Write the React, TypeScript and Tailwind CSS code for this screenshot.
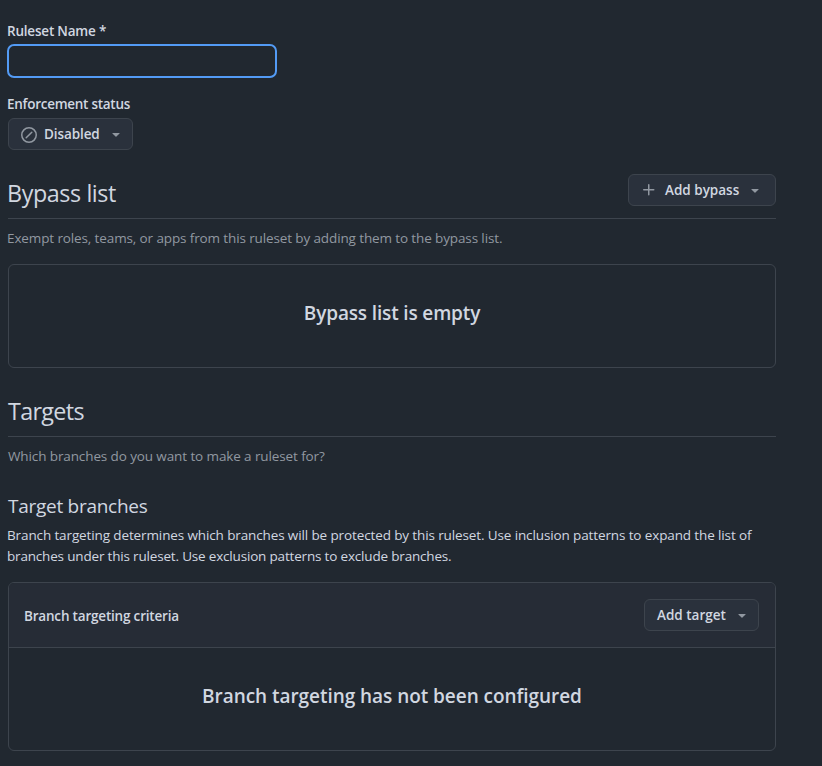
import type { ReactNode } from "react";

function Caret() {
  return (
    <svg width="16" height="16" viewBox="0 0 16 16" fill="#9198a1" className="shrink-0">
      <path d="m4.427 7.427 3.396 3.396a.25.25 0 0 0 .354 0l3.396-3.396A.25.25 0 0 0 11.396 7H4.604a.25.25 0 0 0-.177.427Z" />
    </svg>
  );
}

function MenuButton({ icon, children, className }: { icon?: ReactNode; children: ReactNode; className: string }) {
  return (
    <button
      type="button"
      className={`flex h-8 shrink-0 items-center rounded-md border border-[#3d444d] bg-[#2a313c] pl-3 text-[13.5px] font-semibold whitespace-nowrap ${className}`}
    >
      {icon}
      <span className="flex-1 text-left">{children}</span>
      <Caret />
    </button>
  );
}

export default function App() {
  return (
    <main className="h-[766px] w-[822px] overflow-hidden bg-[#212830] pl-2 font-['Open_Sans',sans-serif] text-[13.5px] leading-[21px] text-[#d1d7e0]">
      <div className="w-[768px] pt-[21px]">
        <label htmlFor="ruleset-name" className="-ml-px block w-fit font-semibold tracking-[-0.2px]">
          Ruleset Name *
        </label>
        <input
          id="ruleset-name"
          className="-ml-px mt-0.5 block h-[34px] w-[270px] rounded-[7px] border-2 border-[#539bf5] bg-[#212830] px-3 outline-none"
        />

        <p className="mt-4 -ml-px w-fit font-semibold tracking-[-0.27px]">Enforcement status</p>
        <MenuButton
          className="mt-[3px] w-[125px] pr-2 tracking-[-0.1px]"
          icon={
            <svg width="16" height="16" viewBox="0 0 16 16" fill="none" stroke="#9198a1" strokeWidth="1.5" className="mr-[7px] translate-y-px">
              <circle cx="8" cy="8" r="7.25" />
              <path d="m5.2 10.8 5.6-5.6" strokeLinecap="round" />
            </svg>
          }
        >
          Disabled
        </MenuButton>

        <header className="mt-6 flex h-[45px] items-start justify-between border-b border-[#3d444d]">
          <h2 className="mt-px -ml-px text-[23.3px] leading-9 tracking-[-0.4px]">Bypass list</h2>
          <MenuButton
            className="w-[148px] pr-3"
            icon={
              <svg width="16" height="16" viewBox="0 0 16 16" fill="#9198a1" className="mr-2">
                <path d="M7.75 2a.75.75 0 0 1 .75.75V7h4.25a.75.75 0 0 1 0 1.5H8.5v4.25a.75.75 0 0 1-1.5 0V8.5H2.75a.75.75 0 0 1 0-1.5H7V2.75A.75.75 0 0 1 7.75 2Z" />
              </svg>
            }
          >
            Add bypass
          </MenuButton>
        </header>
        <p className="mt-[9px] -ml-px w-fit tracking-[-0.12px] text-[#9198a1]">
          Exempt roles, teams, or apps from this ruleset by adding them to the bypass list.
        </p>
        <section className="mt-[15px] flex h-[104px] items-center justify-center rounded-md border border-[#3d444d] pb-[5px]">
          <h3 className="text-[19px] font-semibold tracking-[-0.15px]">Bypass list is empty</h3>
        </section>

        <header className="mt-[25px] h-11 border-b border-[#3d444d]">
          <h2 className="text-[23.3px] leading-9 tracking-[-0.65px]">Targets</h2>
        </header>
        <p className="mt-[9px] w-fit tracking-[-0.11px] text-[#9198a1]">Which branches do you want to make a ruleset for?</p>

        <h3 className="mt-6 text-[19px] leading-[30px] tracking-[-0.27px]">Target branches</h3>
        <p className="mt-1 -ml-px">
          <span className="block w-fit tracking-[-0.12px] whitespace-nowrap">
            Branch targeting determines which branches will be protected by this ruleset. Use inclusion patterns to expand the list of
          </span>
          <span className="block w-fit tracking-[-0.18px] whitespace-nowrap">
            branches under this ruleset. Use exclusion patterns to exclude branches.
          </span>
        </p>

        <section className="mt-[15px] h-[169px] overflow-hidden rounded-md border border-[#3d444d]">
          <div className="flex h-[65px] items-center justify-between border-b border-[#3d444d] bg-[#262c36] px-4">
            <h4 className="mt-0.5 -ml-px font-semibold tracking-[-0.19px]">Branch targeting criteria</h4>
            <MenuButton className="w-[115px] pr-2">Add target</MenuButton>
          </div>
          <div className="flex h-[102px] items-center justify-center pb-[5px]">
            <h3 className="text-[19px] font-semibold tracking-[-0.05px]">Branch targeting has not been configured</h3>
          </div>
        </section>
      </div>
    </main>
  );
}
